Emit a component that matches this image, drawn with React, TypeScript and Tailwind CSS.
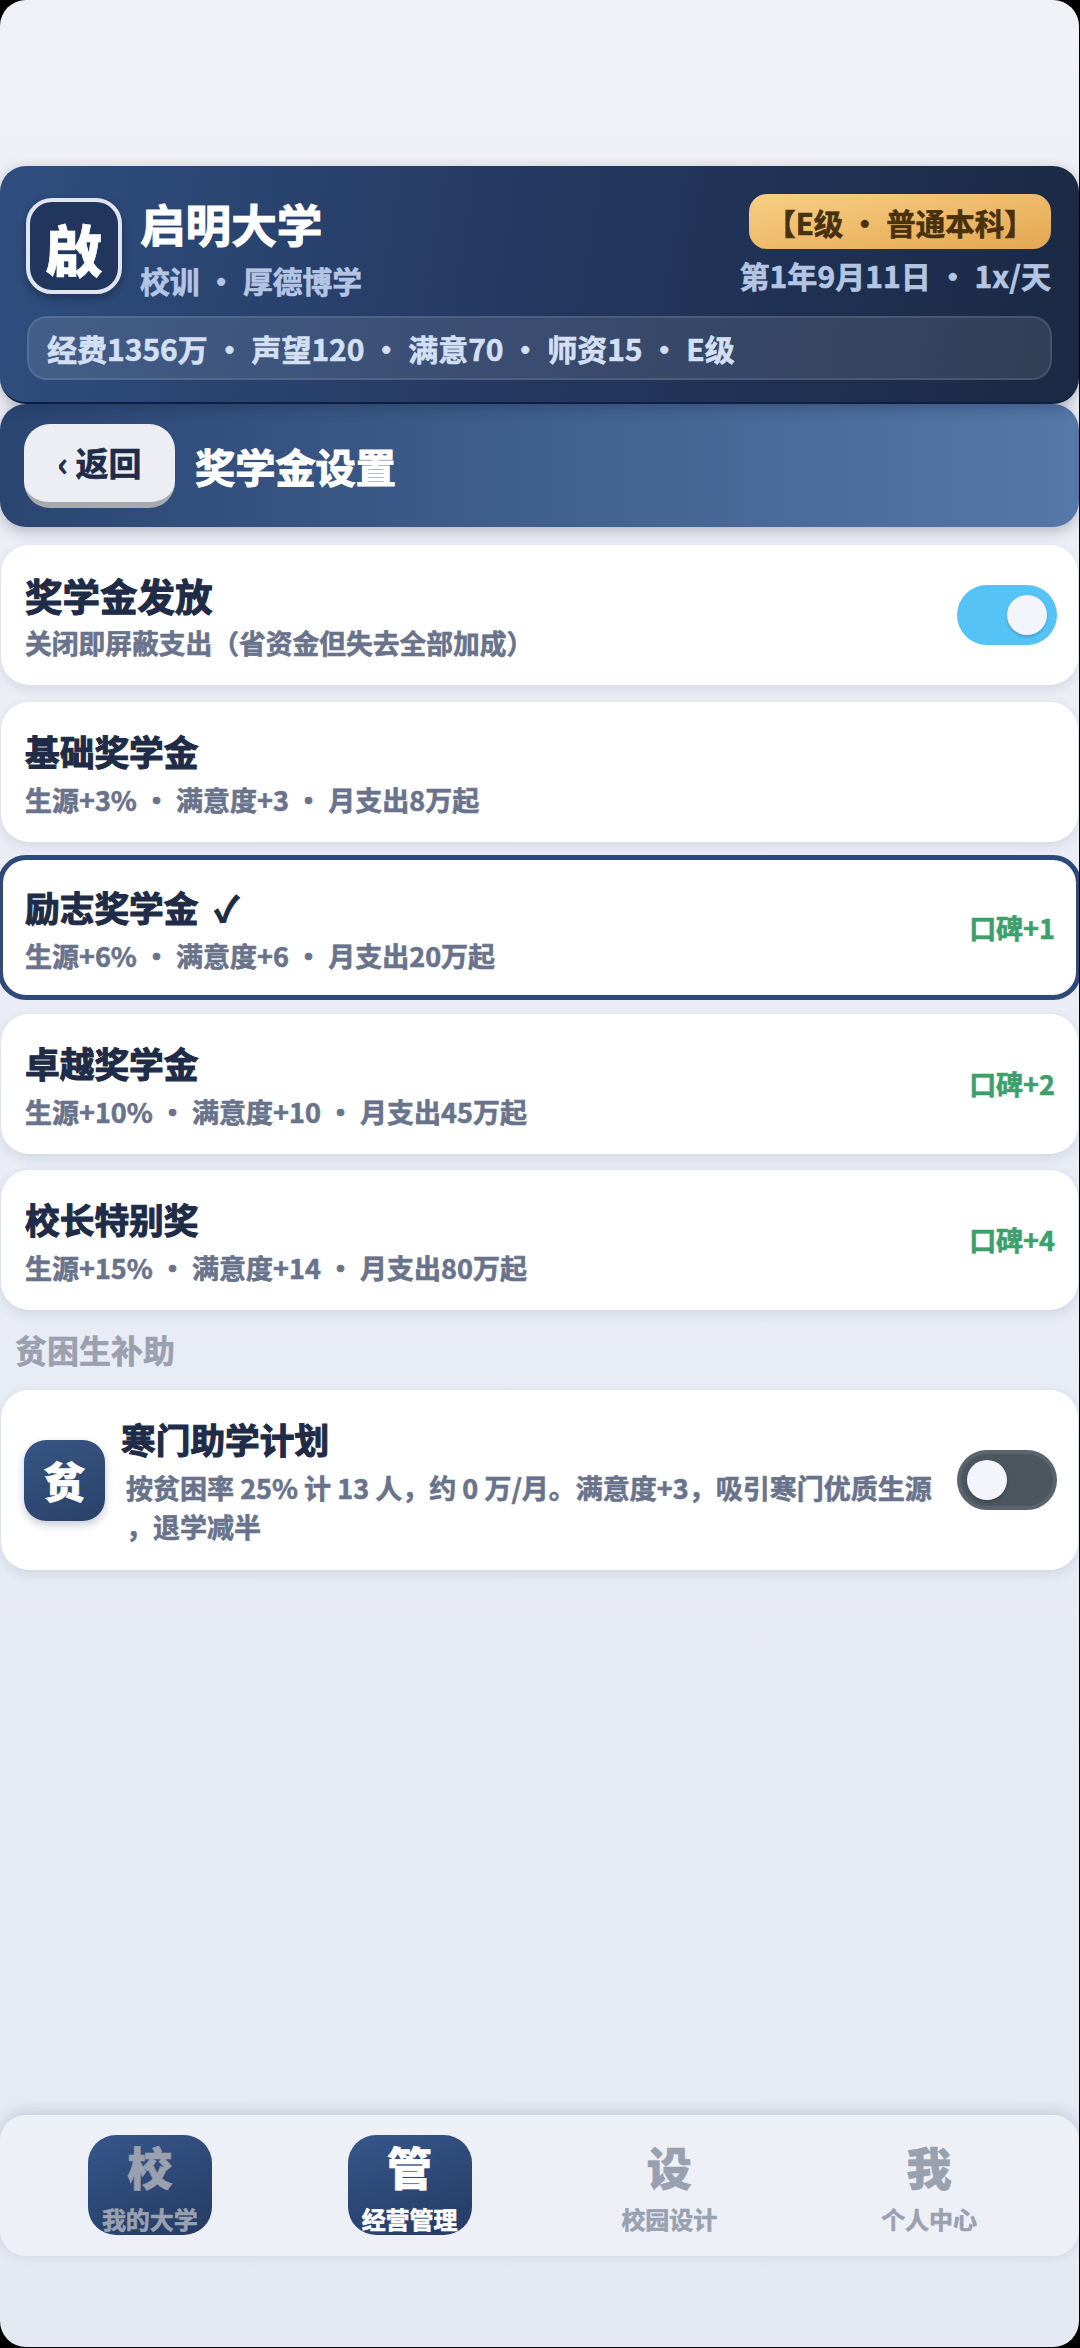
import React from 'react';

type Tier = { name: string; detail: string; bonus?: string; selected?: boolean };

const tiers: Tier[] = [
  { name: '基础奖学金', detail: '生源+3% • 满意度+3 • 月支出8万起' },
  { name: '励志奖学金', detail: '生源+6% • 满意度+6 • 月支出20万起', bonus: '口碑+1', selected: true },
  { name: '卓越奖学金', detail: '生源+10% • 满意度+10 • 月支出45万起', bonus: '口碑+2' },
  { name: '校长特别奖', detail: '生源+15% • 满意度+14 • 月支出80万起', bonus: '口碑+4' },
];

const tabs = [
  { glyph: '校', label: '我的大学', filled: true, active: false },
  { glyph: '管', label: '经营管理', filled: true, active: true },
  { glyph: '设', label: '校园设计', filled: false, active: false },
  { glyph: '我', label: '个人中心', filled: false, active: false },
];

const cardBase = 'flex items-center justify-between rounded-[28px] bg-white';
const cardShadow = 'shadow-[0_4px_12px_rgba(30,45,90,0.11)]';
const heavy = '[-webkit-text-stroke-width:1.1px]';

function Toggle({ on }: { on: boolean }) {
  return (
    <div
      className={
        on
          ? 'flex h-[60px] w-[100px] shrink-0 items-center justify-end rounded-full bg-[#56c3f6] px-[10px]'
          : 'flex h-[60px] w-[100px] shrink-0 items-center rounded-full border-4 border-[#59646f] bg-[#4b565f] px-[6px]'
      }
    >
      <div className="size-[40px] rounded-full bg-[#f3f5fb] shadow-[0_2px_3px_rgba(0,0,0,0.18)]" />
    </div>
  );
}

function Header() {
  return (
    <header className="relative z-10 h-[238px] rounded-[26px] border-b-2 border-[#101f3e] bg-linear-[100deg] from-[#2f4e7f] via-[#243860] to-[#1a2943] px-[27px] shadow-[0_4px_14px_rgba(20,30,60,0.3)]">
      <div className="flex h-[150px] justify-between pt-[28px]">
        <div className="flex">
          <div className="-ml-px mt-[4px] flex size-[96px] items-center justify-center rounded-[26px] border-4 border-[#dfe4f0] bg-[#21365d] pt-[4px] text-[56px] leading-none font-black text-white shadow-[0_4px_8px_rgba(0,0,0,0.3)]">
            啟
          </div>
          <div className="ml-[18px]">
            <div className={`-mt-px text-[45.6px] leading-[60px] font-bold text-white ${heavy}`}>启明大学</div>
            <div className="mt-[7px] text-[29.8px] leading-[40px] font-bold text-[#b4c5e4]">校训 • 厚德博学</div>
          </div>
        </div>
        <div className="mr-px flex flex-col items-end">
          <div className="flex h-[55px] w-[302px] items-center justify-center rounded-[18px] bg-linear-to-br from-[#f8cf85] to-[#e3a750] pt-px text-[29.5px] font-bold text-[#49300f]">
            【E级 • 普通本科】
          </div>
          <div className="mt-[6px] text-[30.1px] leading-[40px] font-bold text-[#b4c5e4]">第1年9月11日 • 1x/天</div>
        </div>
      </div>
      <div className="flex h-[64px] items-center rounded-[20px] border-2 border-white/10 bg-white/10 pl-[18px] text-[30px] font-bold text-[#d3dff2]">
        经费1356万 • 声望120 • 满意70 • 师资15 • E级
      </div>
    </header>
  );
}

function TitleBar() {
  return (
    <div className="flex h-[123px] items-center rounded-[26px] bg-linear-to-r from-[#2b4572] via-[#40608f] to-[#5578a8] pl-[24px] shadow-[0_4px_14px_rgba(20,30,60,0.28)]">
      <button className="flex h-[84px] w-[151px] items-center justify-center rounded-[26px] border-b-[6px] border-[#a9aaae] bg-[#edeef4] text-[33px] font-bold whitespace-pre text-[#202c47]">
        ‹ 返回
      </button>
      <h1 className={`ml-[20px] text-[40.2px] leading-[60px] font-bold text-white ${heavy}`}>奖学金设置</h1>
    </div>
  );
}

export default function App() {
  return (
    <div className="h-[2348px] w-[1080px] overflow-hidden bg-black pr-px pb-px font-['Noto_Sans_CJK_SC',sans-serif] [-webkit-text-stroke-width:0.6px]">
      <div className="flex h-[2347px] w-[1079px] flex-col overflow-hidden rounded-[26px] bg-linear-to-b from-[#f0f1f6] via-[#e9ecf5] via-50% to-[#e5e9f2] pt-[166px]">
        <Header />
        <TitleBar />

        <main className="flex h-[1588px] shrink-0 flex-col px-px pt-[18px]">
          <section className={`${cardBase} ${cardShadow} mb-px h-[140px] shrink-0 pr-[21px] pl-[24px]`}>
            <div className="pt-[4px]">
              <div className={`text-[37.5px] leading-[48px] font-bold text-[#202c47] ${heavy}`}>奖学金发放</div>
              <div className="mt-[4px] text-[26.75px] leading-[40px] font-bold text-[#69738c]">
                关闭即屏蔽支出（省资金但失去全部加成）
              </div>
            </div>
            <Toggle on />
          </section>

          {tiers.map((t) => (
            <section
              key={t.name}
              className={
                t.selected
                  ? `${cardBase} -mx-[3px] mt-[13px] -mb-[2px] h-[145px] shrink-0 border-[5px] border-[#2f4a78] pr-[21px] pl-[22px]`
                  : `${cardBase} ${cardShadow} mt-[16px] h-[140px] shrink-0 pr-[23px] pl-[24px]`
              }
            >
              <div className="pt-[3px]">
                <div className={`text-[34.7px] leading-[48px] font-bold whitespace-pre text-[#202c47] ${heavy}`}>
                  {t.name}
                  {t.selected && '  ✓'}
                </div>
                <div className="mt-[5px] text-[27px] leading-[40px] font-bold text-[#69738c]">{t.detail}</div>
              </div>
              {t.bonus && <div className="pt-px text-[27px] font-bold text-[#3d9f6c]">{t.bonus}</div>}
            </section>
          ))}

          <h2 className="mt-[15px] ml-[14px] h-[65px] shrink-0 text-[32px] leading-[48px] font-bold text-[#9aa0b0]">
            贫困生补助
          </h2>

          <section className={`${cardBase} ${cardShadow} h-[180px] shrink-0 pr-[21px] pl-[23px]`}>
            <div className="flex items-center">
              <div className="flex size-[81px] items-center justify-center rounded-[22px] bg-linear-[160deg] from-[#385584] to-[#294269] text-[42px] leading-none font-black text-white shadow-[0_4px_8px_rgba(30,50,90,0.25)]">
                贫
              </div>
              <div className="ml-[16px]">
                <div className={`text-[34.7px] leading-[48px] font-bold text-[#202c47] ${heavy}`}>寒门助学计划</div>
                <div className="mt-[5px] ml-[5px] text-[27px] leading-[39px] font-bold whitespace-nowrap text-[#69738c]">
                  按贫困率 25% 计 13 人，约 0 万/月。满意度+3，吸引寒门优质生源
                  <br />
                  ，退学减半
                </div>
              </div>
            </div>
            <Toggle on={false} />
          </section>
        </main>

        <nav className="flex h-[141px] shrink-0 rounded-[26px] bg-linear-to-b from-[#edf0f4] to-[#eeeff7] px-[20px] pt-[20px] shadow-[0_-3px_14px_rgba(30,40,70,0.16)]">
          {tabs.map((t) => (
            <div key={t.label} className="flex w-[260px] justify-center">
              <div
                className={`flex h-[100px] w-[124px] flex-col items-center rounded-[28px] font-bold ${
                  t.filled ? 'bg-linear-[160deg] from-[#37568a] to-[#243b64]' : ''
                } ${t.active ? 'text-white' : 'text-[#99a1b0]'}`}
              >
                <span className="mt-[6px] text-[45px] leading-[52px] font-black">{t.glyph}</span>
                <span className="mt-[8px] text-[24px] leading-[36px]">{t.label}</span>
              </div>
            </div>
          ))}
        </nav>
      </div>
    </div>
  );
}
